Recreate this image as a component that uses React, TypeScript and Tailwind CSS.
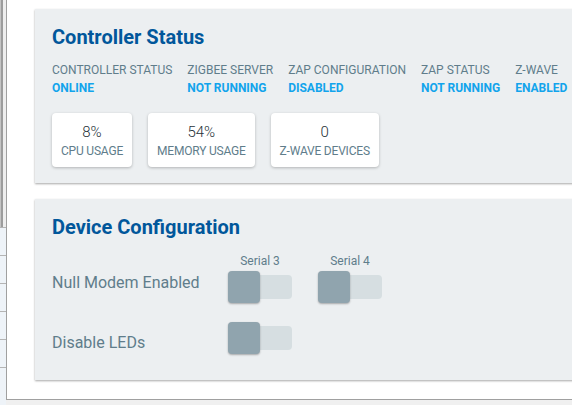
const statusItems = [
  { label: "CONTROLLER STATUS", value: "ONLINE" },
  { label: "ZIGBEE SERVER", value: "NOT RUNNING" },
  { label: "ZAP CONFIGURATION", value: "DISABLED" },
  { label: "ZAP STATUS", value: "NOT RUNNING" },
  { label: "Z-WAVE", value: "ENABLED" },
];

const stats = [
  { value: "8%", label: "CPU USAGE" },
  { value: "54%", label: "MEMORY USAGE" },
  { value: "0", label: "Z-WAVE DEVICES" },
];

function Toggle() {
  return (
    <div className="relative w-[64px] h-[33px]">
      <div className="absolute left-0 top-[4px] w-[64px] h-[24px] rounded-[4px] bg-[#d6dee1]" />
      <div className="absolute left-0 top-0 w-[32px] h-[32px] rounded-[4px] bg-[#90a4ae] shadow-[0_1px_2px_rgba(0,0,0,0.3)]" />
    </div>
  );
}

function LeftStrip() {
  return (
    <div className="w-[6px] flex flex-col shrink-0">
      <div className="h-[227px] flex">
        <div className="w-[1px] bg-[#c4c4c4]" />
        <div className="w-[2px] bg-[#9c9c9c]" />
        <div className="flex-1 bg-[#eeeeee]" />
      </div>
      <div className="flex-1 flex flex-col bg-[#eef3f8]">
        {[0, 1, 2, 3, 4, 5].map((i) => (
          <div key={i} className="h-[28px] border-t border-[#b4b4b4]" />
        ))}
      </div>
    </div>
  );
}

export default function App() {
  return (
    <div
      className="w-[572px] h-[405px] flex bg-[#f0f0f0] overflow-hidden"
      style={{ fontFamily: "Roboto, 'Noto Sans', sans-serif" }}
    >
      <LeftStrip />
      <div className="h-[400px] w-[600px] shrink-0 bg-white border-l border-b border-[#a0a0a0] pl-[28px] pt-[9px] flex flex-col gap-4">
        {/* Controller Status */}
        <div className="w-[600px] bg-[#eceff1] shadow-[0_1px_2px_rgba(0,0,0,0.35)] pl-[17px] pt-[16px] pb-[16px]">
          <h2 className="text-[20px] leading-[24px] font-bold text-[#01579b]">Controller Status</h2>
          <div className="flex gap-[15px] mt-[13px]">
            {statusItems.map((s) => (
              <div key={s.label}>
                <div className="text-[12px] leading-[16px] text-[#607d8b]">{s.label}</div>
                <div className="text-[12px] leading-[16px] font-bold text-[#12a4ec] mt-[2px]">{s.value}</div>
              </div>
            ))}
          </div>
          <div className="flex gap-4 mt-[17px]">
            {stats.map((s) => (
              <div
                key={s.label}
                className="bg-white rounded-[4px] shadow-[0_1px_3px_rgba(0,0,0,0.25)] px-[9px] pt-[9px] pb-[8px] text-center"
              >
                <div className="text-[15px] leading-[20px] font-light text-[#263238]">{s.value}</div>
                <div className="text-[12px] tracking-[-0.2px] leading-[16px] text-[#607d8b] mt-[1px]">{s.label}</div>
              </div>
            ))}
          </div>
        </div>

        {/* Device Configuration */}
        <div className="w-[600px] bg-[#eceff1] shadow-[0_1px_2px_rgba(0,0,0,0.35)] pl-[17px] pt-[16px] pb-[25px]">
          <h2 className="text-[20px] leading-[24px] font-bold text-[#01579b]">Device Configuration</h2>
          <div className="grid grid-cols-[176px_90px_90px] items-start mt-[14px]">
            <div className="text-[16px] leading-[24px] text-[#607d8b] mt-[18px]">Null Modem Enabled</div>
            <div className="w-[64px] flex flex-col items-center gap-[2px]">
              <div className="text-[12px] leading-[16px] text-[#607d8b]">Serial 3</div>
              <Toggle />
            </div>
            <div className="w-[64px] flex flex-col items-center gap-[2px]">
              <div className="text-[12px] leading-[16px] text-[#607d8b]">Serial 4</div>
              <Toggle />
            </div>
            <div className="text-[16px] leading-[24px] text-[#607d8b] mt-[27px]">Disable LEDs</div>
            <div className="mt-[18px]">
              <Toggle />
            </div>
            <div />
          </div>
        </div>
      </div>
    </div>
  );
}
